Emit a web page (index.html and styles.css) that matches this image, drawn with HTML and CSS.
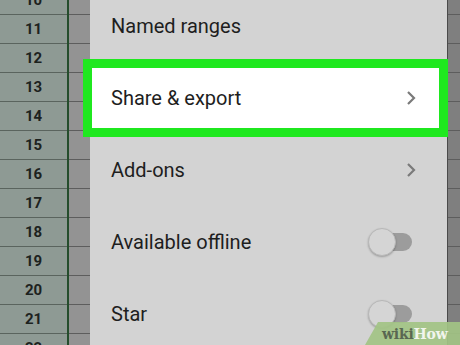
FILE: index.html
```html
<!DOCTYPE html>
<html lang="en">
<head>
  <meta charset="UTF-8" />
  <title>Sheets menu</title>
  <link rel="stylesheet" href="styles.css">
</head>
<body>
  <div class="sheet">
    <div class="row-nums">
      <div class="num">10</div>
      <div class="num">11</div>
      <div class="num">12</div>
      <div class="num">13</div>
      <div class="num">14</div>
      <div class="num">15</div>
      <div class="num">16</div>
      <div class="num">17</div>
      <div class="num">18</div>
      <div class="num">19</div>
      <div class="num">20</div>
      <div class="num">21</div>
      <div class="num">22</div>
    </div>
    <div class="cells left-cells">
      <div class="cell"></div><div class="cell"></div><div class="cell"></div><div class="cell"></div>
      <div class="cell"></div><div class="cell"></div><div class="cell"></div><div class="cell"></div>
      <div class="cell"></div><div class="cell"></div><div class="cell"></div><div class="cell"></div>
      <div class="cell"></div>
    </div>

    <div class="menu">
      <div class="item">Named ranges</div>
      <div class="item highlight">
        <span>Share &amp; export</span>
        <svg class="chevron" width="10" height="16" viewBox="0 0 10 16"><path d="M2 2 L8 8 L2 14" fill="none" stroke="#7a7a7a" stroke-width="2.2"/></svg>
      </div>
      <div class="item">
        <span>Add-ons</span>
        <svg class="chevron" width="10" height="16" viewBox="0 0 10 16"><path d="M2 2 L8 8 L2 14" fill="none" stroke="#7a7a7a" stroke-width="2.2"/></svg>
      </div>
      <div class="item">
        <span>Available offline</span>
        <div class="toggle"><div class="track"></div><div class="knob"></div></div>
      </div>
      <div class="item">
        <span>Star</span>
        <div class="toggle"><div class="track"></div><div class="knob"></div></div>
      </div>
    </div>

    <div class="cells right-cells">
      <div class="cell"></div><div class="cell"></div><div class="cell"></div><div class="cell"></div>
      <div class="cell"></div><div class="cell"></div><div class="cell"></div><div class="cell"></div>
      <div class="cell"></div><div class="cell"></div><div class="cell"></div><div class="cell"></div>
      <div class="cell"></div>
    </div>
  </div>

  <div class="watermark"><span class="wiki">wiki</span><span class="how">How</span></div>
</body>
</html>
```

FILE: styles.css
```css
body {
  margin: 0;
  width: 460px;
  height: 345px;
  overflow: hidden;
  position: relative;
  font-family: Roboto, 'Liberation Sans', sans-serif;
  background: #d3d3d3;
}

.sheet {
  display: flex;
  height: 345px;
  overflow: hidden;
}

.row-nums {
  width: 67px;
  background: #8e9a94;
  border-right: 2px solid #244d2c;
  margin-top: -14px;
}
.num {
  height: 28px;
  border-bottom: 1px solid #5a645e;
  display: flex;
  align-items: center;
  justify-content: center;
  font-weight: 700;
  font-size: 15px;
  color: #1d221e;
}

.cells {
  margin-top: -14px;
  background: #939393;
}
.left-cells { width: 21px; }
.right-cells {
  width: 12px;
  background: #7f7f7f;
  border-left: 1px solid #4a4a4a;
}
.cell {
  height: 28px;
  border-bottom: 1px solid #5d5d5d;
}

.menu {
  flex: 1;
  background: #d3d3d3;
  margin-top: -10px;
  display: flex;
  flex-direction: column;
}
.item {
  height: 72px;
  flex-shrink: 0;
  box-sizing: border-box;
  padding: 0 31px 0 21px;
  display: flex;
  align-items: center;
  justify-content: space-between;
  font-size: 20px;
  color: #1e1e1e;
}
.item.highlight {
  height: 78px;
  margin: -3px -1px -3px -7px;
  padding: 0 23px 0 19px;
  background: #fff;
  border: 9px solid #1fe81f;
  position: relative;
  z-index: 1;
}

.chevron {
  display: block;
}

.toggle {
  position: relative;
  width: 44px;
  height: 28px;
  margin-right: 4px;
}
.track {
  position: absolute;
  left: 10px;
  top: 5px;
  width: 34px;
  height: 18px;
  border-radius: 9px;
  background: #9c9c9c;
}
.knob {
  position: absolute;
  left: 0;
  top: 0;
  width: 26px;
  height: 26px;
  border-radius: 50%;
  background: #d5d5d5;
  border: 1px solid #b8b8b8;
  box-shadow: 0 1px 2px rgba(0, 0, 0, 0.25);
}

.watermark {
  position: absolute;
  right: 0;
  bottom: 0;
  width: 78px;
  height: 23px;
  padding-left: 17px;
  background: #a2c485;
  clip-path: polygon(13px 0, 100% 0, 100% 100%, 0 100%);
  font-family: 'DejaVu Serif', 'Liberation Serif', serif;
  font-weight: 700;
  font-size: 14px;
  line-height: 24px;
  letter-spacing: -0.2px;
  z-index: 2;
  opacity: 0.92;
}
.wiki { color: #4f5e47; }
.how { color: #f4f8ef; }
```
